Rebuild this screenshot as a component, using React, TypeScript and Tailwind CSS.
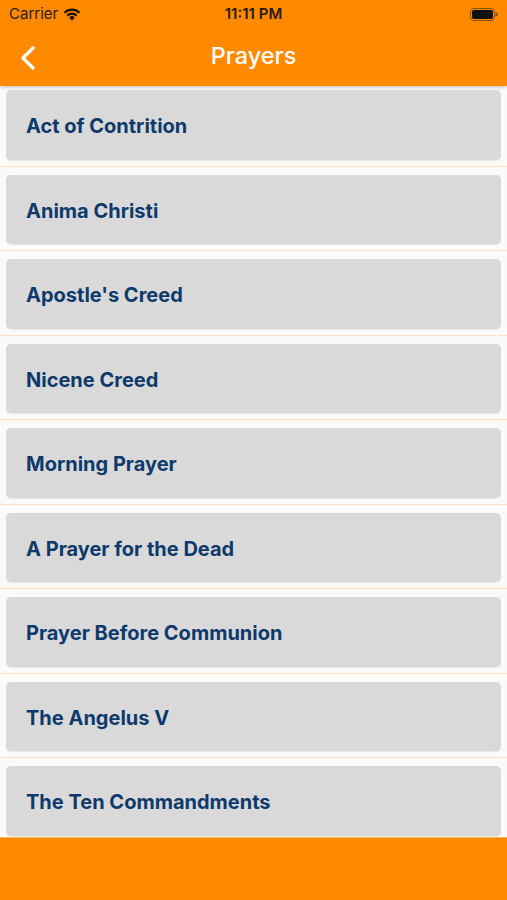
const prayers = [
  "Act of Contrition",
  "Anima Christi",
  "Apostle's Creed",
  "Nicene Creed",
  "Morning Prayer",
  "A Prayer for the Dead",
  "Prayer Before Communion",
  "The Angelus V",
  "The Ten Commandments",
];

function StatusBar() {
  return (
    <div className="relative flex h-[28px] items-center justify-between px-[9px] text-[15px] text-[#2a1a00]">
      <div className="flex items-center gap-[5px]">
        <span>Carrier</span>
        <svg width="18" height="13" viewBox="0 0 18 13">
          <path d="M9 12.5 L6.2 9.4 A4 4 0 0 1 11.8 9.4 Z" fill="#1a1000" />
          <path d="M3.6 6.8 A7.6 7.6 0 0 1 14.4 6.8 L12.9 8.4 A5.5 5.5 0 0 0 5.1 8.4 Z" fill="#1a1000" />
          <path d="M0.8 3.9 A11.6 11.6 0 0 1 17.2 3.9 L15.7 5.5 A9.4 9.4 0 0 0 2.3 5.5 Z" fill="#1a1000" />
        </svg>
      </div>
      <span className="absolute left-1/2 -translate-x-1/2 font-semibold">11:11 PM</span>
      <svg width="28" height="13" viewBox="0 0 28 13">
        <rect x="0.5" y="0.5" width="24" height="12" rx="3.5" fill="none" stroke="#8a5200" strokeWidth="1" />
        <rect x="2" y="2" width="21" height="9" rx="2" fill="#111" />
        <rect x="25.5" y="4.5" width="2" height="4" rx="1" fill="#8a5200" />
      </svg>
    </div>
  );
}

export default function App() {
  return (
    <div
      className="flex h-[900px] w-full flex-col overflow-hidden bg-[#fafafa]"
      style={{ fontFamily: "Inter, 'Noto Sans', sans-serif" }}
    >
      <div className="relative z-10 bg-[#ff8a00] shadow-[0_1px_4px_rgba(0,0,0,0.25)]">
        <StatusBar />
        <div className="relative flex h-[58px] items-center justify-center pb-[2px]">
          <button className="absolute left-[16px] top-[14px] p-[4px]">
            <svg width="16" height="24" viewBox="0 0 16 24">
              <path d="M13 2 L3 12 L13 22" fill="none" stroke="#fff" strokeWidth="3.2" strokeLinecap="round" strokeLinejoin="round" />
            </svg>
          </button>
          <h1 className="text-[23.5px] font-medium text-white">Prayers</h1>
        </div>
      </div>

      <div className="flex-1 overflow-hidden">
        {prayers.map((p, i) => (
          <div
            key={p}
            className={`border-b border-[#fde3c4] px-[6px] pb-[6px] ${i === 0 ? "pt-[4px]" : "pt-[8px]"}`}
          >
            <div className="flex h-[69.5px] items-center rounded-[5px] bg-[#d9d9d9] px-[20px] pt-[3px] shadow-[0_1px_1px_rgba(0,0,0,0.08)]">
              <span className="text-[20px] font-bold text-[#0e3a6b]">{p}</span>
            </div>
          </div>
        ))}
      </div>

      <div className="h-[63px] shrink-0 border-t border-[#ffb060] bg-[#ff8a00]" />
    </div>
  );
}
